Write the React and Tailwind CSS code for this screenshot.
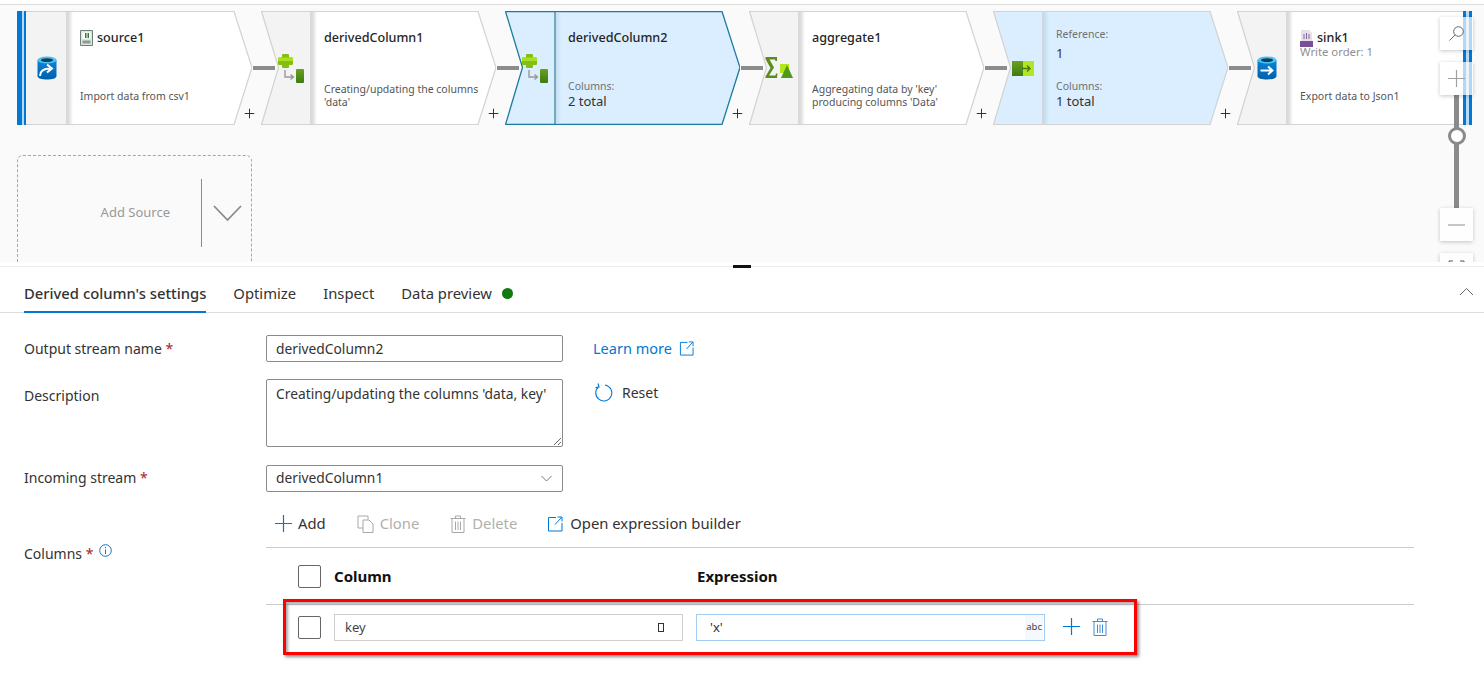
import React from 'react';
import { Plus } from 'lucide-react';

const DbIcon = ({ sink }) => (
    <svg width="20" height="24" viewBox="0 0 20 24">
        <defs>
            <linearGradient id={sink ? 'dbs' : 'dbn'} x1="0" y1="0" x2="0" y2="1">
                <stop offset="0" stopColor="#0a84d8" />
                <stop offset="1" stopColor="#0060ad" />
            </linearGradient>
        </defs>
        <path d="M0.5 4 V20 C0.5 22.5 5 23.5 10 23.5 S19.5 22.5 19.5 20 V4 Z" fill={`url(#${sink ? 'dbs' : 'dbn'})`} />
        <ellipse cx="10" cy="4" rx="9.5" ry="3.6" fill="#4cc3ea" />
        <ellipse cx="10" cy="4.2" rx="6" ry="1.9" fill="#0b3f6d" />
        {sink ? (
            <path d="M3.5 14.5 H15 M11 10.5 L15.5 14.5 L11 18.5" fill="none" stroke="#fff" strokeWidth="2" />
        ) : (
            <path d="M3 20 C3 14.5 7 12.5 13 12.5 M10 8.5 L15 12.5 L10 16.5" fill="none" stroke="#fff" strokeWidth="2" />
        )}
    </svg>
);

const DerivedIcon = () => (
    <svg width="27" height="29" viewBox="0 0 27 29">
        <path d="M5 0 H10 Q11 0 11 1 V3.5 H14 Q15 3.5 15 4.5 V10 Q15 11 14 11 H11 V13 Q11 14 10 14 H5 Q4 14 4 13 V11 H1 Q0 11 0 10 V4.5 Q0 3.5 1 3.5 H4 V1 Q4 0 5 0 Z" fill="#86bd14" />
        <path d="M1 3.5 H14 Q15 3.5 15 4.5 V7 H0 V4.5 Q0 3.5 1 3.5 Z" fill="#a6e01e" />
        <path d="M7 16 V23 H15 M12.5 20.5 L15.5 23 L12.5 25.5" fill="none" stroke="#999" strokeWidth="1.4" />
        <defs>
            <linearGradient id="derg" x1="0" y1="0" x2="0" y2="1">
                <stop offset="0" stopColor="#6aa01e" />
                <stop offset="1" stopColor="#3f7a14" />
            </linearGradient>
        </defs>
        <rect x="18" y="15" width="8" height="14" rx="1" fill="url(#derg)" />
    </svg>
);

const AggregateIcon = () => (
    <svg width="28" height="22" viewBox="0 0 28 22">
        <path d="M0.5 0 H12 V4 H10.5 L10 2.5 H4.5 L9 10.5 L4 18.5 H10.5 L11 16.5 H12.5 L12 21 H0.5 V19.5 L5.5 11 L0.5 2 Z" fill="#5b8c1c" />
        <rect x="15" y="7" width="9" height="9" fill="#b4e61e" />
        <path d="M22 8 L28 21 H16 Z" fill="#4f9a18" />
    </svg>
);

const ReferenceIcon = () => (
    <svg width="22" height="15" viewBox="0 0 22 15">
        <defs>
            <linearGradient id="refg" x1="0" y1="0" x2="0" y2="1">
                <stop offset="0" stopColor="#6aa01e" />
                <stop offset="1" stopColor="#3f7a14" />
            </linearGradient>
        </defs>
        <rect x="0" y="0" width="11" height="15" fill="url(#refg)" />
        <rect x="11" y="0" width="11" height="15" fill="#b4e61e" />
        <path d="M10 7.5 H18 M15 4.5 L18 7.5 L15 10.5" fill="none" stroke="#3f7a14" strokeWidth="1.4" />
    </svg>
);

const CsvIcon = () => (
    <svg width="13" height="16" viewBox="0 0 13 16">
        <path d="M0.5 0.5 H12.5 V15.5 H0.5 Z" fill="#dfe6e2" stroke="#6f7f78" />
        <rect x="2.5" y="2.5" width="8" height="6" fill="#fff" />
        <rect x="5" y="3" width="1.5" height="5" fill="#2f7d32" />
        <rect x="7.5" y="3" width="1.5" height="5" fill="#2f7d32" />
        <rect x="2.5" y="10.5" width="8" height="3" fill="#8b9a93" />
    </svg>
);

const JsonIcon = () => (
    <svg width="13" height="17" viewBox="0 0 13 17">
        <path d="M1 0 H9 L12 3 V17 H1 Z" fill="#e4e2e4" />
        <path d="M4 4 V9 M6.5 3 V9 M9 4 V9" stroke="#8a5fa8" strokeWidth="1" />
        <rect x="0" y="11" width="13" height="6" fill="#7a4f9a" />
    </svg>
);

const LinePlus = ({ color, className }) => (
    <svg className={className} width="17" height="17" viewBox="0 0 17 17" fill="none" stroke={color} strokeWidth="1.2">
        <path d="M0 8.5 H17 M8.5 0 V17" />
    </svg>
);

const nodes = [
    { id: 'source1', shape: 'first', icon: <DbIcon />, fileIcon: <CsvIcon />, title: 'source1', desc: ['Import data from csv1'] },
    { id: 'derivedColumn1', icon: <DerivedIcon />, title: 'derivedColumn1', desc: ["Creating/updating the columns", "'data'"] },
    { id: 'derivedColumn2', selected: true, icon: <DerivedIcon />, title: 'derivedColumn2', columns: '2 total' },
    { id: 'aggregate1', icon: <AggregateIcon />, title: 'aggregate1', desc: ["Aggregating data by 'key'", "producing columns 'Data'"] },
    { id: 'reference', tinted: true, icon: <ReferenceIcon />, reference: '1', columns: '1 total' },
    { id: 'sink1', shape: 'last', icon: <DbIcon sink />, fileIcon: <JsonIcon />, title: 'sink1', order: 'Write order: 1', desc: ['Export data to Json1'] },
];

const nodeOutline = (shape) => {
    const left = shape === 'first' ? 'L0.5 113.5' : 'L0.5 113.5 L17.5 56.5';
    if (shape === 'last') return `M0.5 0.5 H234.5 V113.5 H0.5 L17.5 56.5 Z`;
    return `M0.5 0.5 H217 L235 56.5 L217 113.5 ${left} Z`;
};

const FlowNode = ({ node }) => {
    const blue = node.selected || node.tinted;
    const outline = nodeOutline(node.shape);
    return (
        <div className="relative w-[235px] h-[114px] shrink-0">
            <svg className="absolute inset-0" width="235" height="114" viewBox="0 0 235 114">
                <path d={outline} fill={blue ? '#daeeff' : '#ffffff'} />
                <clipPath id={`clip-${node.id}`}><rect x="0" y="0" width="50" height="114" /></clipPath>
                <path d={outline} fill={blue ? '#daeeff' : '#f3f3f3'} clipPath={`url(#clip-${node.id})`} />
                <path d="M50 0.5 V113.5" stroke={node.selected ? '#4d94ab' : '#cfcfcf'} strokeWidth="1.5" />
                <path d={outline} fill="none" stroke={node.selected ? '#1c7c9e' : '#d2d2d2'} strokeWidth={node.selected ? 1.3 : 1.2} />
            </svg>
            <div className={`absolute left-[51px] top-[1px] bottom-[1px] w-[5px] bg-gradient-to-r ${blue ? 'from-[#c4dcee]' : 'from-[#d8d8d8]'} to-transparent`} />

            <div className="relative flex h-full">
                <div className="w-[50px] shrink-0 pl-[10px] flex items-center justify-center">{node.icon}</div>
                <div className="flex-1 min-w-0 pl-[13px] flex flex-col">
                    {node.title && (
                        <div className="mt-[19px] h-[16px] flex items-center gap-[4px] text-[12.6px] leading-[16px] font-medium text-[#252525]">
                            {node.fileIcon}
                            <span>{node.title}</span>
                        </div>
                    )}
                    {node.order && <div className="text-[11.3px] leading-[11px] text-[#8f8f8f]">{node.order}</div>}
                    {node.reference && (
                        <div className="mt-[16px]">
                            <div className="text-[10.5px] leading-[14px] text-[#707070]">Reference:</div>
                            <div className="mt-[4px] text-[13px] leading-[16px] text-[#333]">{node.reference}</div>
                        </div>
                    )}
                    {node.desc && (
                        <div className="mt-auto mb-[10px] h-[38px] flex flex-col justify-center text-[10.5px] leading-[13px] text-[#555]">
                            {node.desc.map(line => <div key={line}>{line}</div>)}
                        </div>
                    )}
                    {node.columns && (
                        <div className="mt-auto mb-[16px]">
                            <div className="text-[10.5px] leading-[14px] text-[#707070]">Columns:</div>
                            <div className="text-[13px] leading-[16px] text-[#333]">{node.columns}</div>
                        </div>
                    )}
                </div>
            </div>

            {node.shape === 'first' && (
                <div className="absolute left-0 top-0 bottom-0 w-[9px] flex">
                    <div className="w-[5px] bg-[#0078d4]" />
                    <div className="w-[2px] bg-[#b9daf5]" />
                    <div className="w-[2px] bg-[#0078d4]" />
                </div>
            )}
            {node.shape === 'last' && (
                <div className="absolute right-0 top-0 bottom-0 w-[9px] flex">
                    <div className="w-[3px] bg-[#0078d4]" />
                    <div className="w-[3px] bg-[#b9daf5]" />
                    <div className="w-[3px] bg-[#0078d4]" />
                </div>
            )}
            {node.shape !== 'last' && (
                <>
                    <div className="absolute left-[236px] top-[55px] w-[22px] h-[4px] bg-[#8c8c8c]" />
                    <Plus className="absolute left-[225px] top-[95px] text-[#333]" size={15} strokeWidth={1.6} />
                </>
            )}
        </div>
    );
};

const ZoomButton = ({ children, className }) => (
    <div className={`absolute right-[11px] w-[33px] h-[33px] bg-white/70 shadow-[0_1px_4px_rgba(0,0,0,0.22)] flex items-center justify-center ${className}`}>
        {children}
    </div>
);

const Canvas = () => (
    <div className="relative h-[262px] shrink-0 overflow-hidden bg-[#fafafa]">
        <div className="h-[5px] bg-white border-b border-[#dcdcdc]" />
        <div className="flex gap-[9px] pl-[17px] pt-[6px]">
            {nodes.map(node => <FlowNode key={node.id} node={node} />)}
        </div>

        <div className="ml-[17px] mt-[30px] w-[235px] h-[140px] rounded-t-md border border-dashed border-[#a6a6a6] flex items-start">
            <div className="w-[152px] pt-[46px] text-right text-[13px] leading-[20px] text-[#999]">Add Source</div>
            <div className="ml-[31px] mt-[23px] w-[1px] h-[68px] bg-[#8a8a8a]" />
            <svg className="ml-[11px] mt-[49px]" width="29" height="17" viewBox="0 0 29 17">
                <path d="M1 1 L14.5 15 L28 1" fill="none" stroke="#8a8a8a" strokeWidth="1.8" />
            </svg>
        </div>

        <div className="absolute left-[1454px] top-[95px] w-[5px] h-[113px] bg-[#8a8a8a]" />
        <div className="absolute left-[1448px] top-[127px] w-[18px] h-[18px] rounded-full bg-white border-[3px] border-[#8a8a8a]" />
        <ZoomButton className="top-[17px]">
            <svg width="15" height="15" viewBox="0 0 15 15" fill="none" stroke="#666">
                <circle cx="9.5" cy="5.5" r="4.8" />
                <path d="M6 9 L0.5 14.5" />
            </svg>
        </ZoomButton>
        <ZoomButton className="top-[62px]"><LinePlus color="#a0a0a0" /></ZoomButton>
        <ZoomButton className="top-[208px]">
            <svg width="17" height="2" viewBox="0 0 17 2"><path d="M0 1 H17" stroke="#a0a0a0" strokeWidth="1.2" /></svg>
        </ZoomButton>
        <ZoomButton className="top-[253px]">
            <svg className="-mt-[14px]" width="17" height="5" viewBox="0 0 17 5"><path d="M1 5 V1 H5 M12 1 H16 V5" fill="none" stroke="#555" /></svg>
        </ZoomButton>
    </div>
);

const Tabs = () => (
    <div className="relative h-[46px] shrink-0 flex gap-[27px] pl-[24px] border-b border-[#dddddd] text-[14.8px] text-[#333]">
        <div className="h-[46px] pt-[16px] leading-[20px] font-medium border-b-2 border-[#0078d4]">Derived column's settings</div>
        <div className="pt-[16px] leading-[20px]">Optimize</div>
        <div className="pt-[16px] leading-[20px]">Inspect</div>
        <div className="pt-[16px] leading-[20px] flex items-start gap-[10px]">
            Data preview
            <span className="mt-[5px] w-[11px] h-[11px] rounded-full bg-[#107c10]" />
        </div>
        <svg className="absolute left-[1459px] top-[20px]" width="15" height="9" viewBox="0 0 15 9">
            <path d="M1 8 L7.5 1.5 L14 8" fill="none" stroke="#666" />
        </svg>
    </div>
);

const ExternalIcon = ({ className, size = 16 }) => (
    <svg className={className} width={size} height={size} viewBox="0 0 16 16" fill="none" stroke="#0078d4">
        <path d="M9 1.5 H1.5 V15 H15 V7" />
        <path d="M8 8.5 L14.5 1.5 M10.5 1 H15 V5.5" />
    </svg>
);

const TrashIcon = ({ color }) => (
    <svg width="16" height="18" viewBox="0 0 16 18" fill="none" stroke={color}>
        <path d="M0.5 3.5 H15.5 M5.5 3.5 V1 H10.5 V3.5 M2 3.5 V17.5 H14 V3.5 M5.5 6.5 V15 M8 6.5 V15 M10.5 6.5 V15" />
    </svg>
);

const Label = ({ children, required, className, after }) => (
    <div className={`w-[242px] shrink-0 text-[14px] leading-[20px] text-[#333] ${className}`}>
        {children}
        {required && <span className="text-[#a4262c]"> *</span>}
        {after}
    </div>
);

const Checkbox = () => <div className="w-[23px] h-[23px] shrink-0 rounded-[2px] border border-[#666] bg-white" />;

const Form = () => (
    <div className="pl-[24px] pt-[22px] text-[#333]">
        <div className="flex items-center h-[27px]">
            <Label required className="pt-[1px]">Output stream name</Label>
            <input readOnly value="derivedColumn2" className="w-[297px] h-[27px] px-[9px] text-[13.8px] rounded-[2px] border border-[#8a8a8a] text-[#333] outline-none" />
            <a className="ml-[30px] text-[14.5px] text-[#0078d4]">Learn more</a>
            <ExternalIcon className="ml-[7px]" size={15} />
        </div>

        <div className="flex items-start mt-[17px]">
            <Label className="pt-[7px]">Description</Label>
            <textarea readOnly value="Creating/updating the columns 'data, key'" className="block w-[297px] h-[68px] px-[9px] py-[4px] text-[13.8px] leading-[20px] rounded-[2px] border border-[#8a8a8a] text-[#333] outline-none" />
            <svg className="ml-[31px] mt-[4px]" width="19" height="19" viewBox="0 0 19 19" fill="none" stroke="#0078d4" strokeWidth="1.1">
                <path d="M5 3.5 A8 8 0 1 0 11 2 M4 0.5 L5 4 L1.5 4.5" />
            </svg>
            <span className="ml-[9px] mt-[4px] text-[14px] leading-[20px]">Reset</span>
        </div>

        <div className="flex items-center mt-[18px] h-[27px]">
            <Label required className="-mt-[1px]">Incoming stream</Label>
            <div className="w-[297px] h-[27px] pl-[9px] pr-[10px] rounded-[2px] border border-[#8a8a8a] flex items-center justify-between text-[13.8px]">
                derivedColumn1
                <svg width="11" height="7" viewBox="0 0 11 7"><path d="M0.5 1 L5.5 6 L10.5 1" fill="none" stroke="#777" /></svg>
            </div>
        </div>

        <div className="flex items-start mt-[18px]">
            <Label
                required
                className="pt-[34px]"
                after={
                    <svg className="inline-block ml-[6px] -translate-y-[5px]" width="13" height="13" viewBox="0 0 13 13" fill="none" stroke="#0078d4">
                        <circle cx="6.5" cy="6.5" r="5.8" />
                        <path d="M6.5 5.5 V10 M6.5 3 V4.2" />
                    </svg>
                }
            >
                Columns
            </Label>
            <div className="w-[1148px]">
                <div className="h-[38px] pb-[10px] border-b border-[#cccccc] flex items-center text-[14.8px]">
                    <LinePlus className="ml-[9px]" color="#0078d4" />
                    <span className="ml-[6px]">Add</span>
                    <svg className="ml-[31px]" width="18" height="18" viewBox="0 0 18 18" fill="none" stroke="#a8a8a8">
                        <path d="M11 4.5 V1 H1 V13 H6 M6 5 H12 L16 9 V17.5 H6 Z" />
                    </svg>
                    <span className="ml-[5px] text-[#b0b0b0]">Clone</span>
                    <span className="ml-[31px]"><TrashIcon color="#a8a8a8" /></span>
                    <span className="ml-[6px] text-[#b0b0b0]">Delete</span>
                    <ExternalIcon className="ml-[30px]" />
                    <span className="ml-[7px]">Open expression builder</span>
                </div>

                <div className="h-[57px] pl-[32px] border-b border-[#cccccc] flex items-center gap-[13px] text-[15px] font-bold text-[#111]">
                    <Checkbox />
                    <div className="w-[349px]">Column</div>
                    <div className="pl-[1px]">Expression</div>
                </div>

                <div className="relative mt-[9px] h-[27px] pl-[32px] flex items-center gap-[13px]">
                    <Checkbox />
                    <div className="w-[349px] h-[27px] pl-[10px] pr-[18px] pt-[1px] border border-[#cfcfcf] flex items-center justify-between text-[13px] text-[#444]">
                        key
                        <span className="w-[6px] h-[9px] -mt-[2px] border border-[#333]" />
                    </div>
                    <div className="w-[349px] h-[27px] pl-[13px] pr-[1px] border border-[#a3cdf0] flex items-center justify-between text-[13px] text-[#333]">
                        'x'
                        <span className="h-full flex items-center px-[1px] bg-[#f5f9fd] text-[9.5px] text-[#444]">abc</span>
                    </div>
                    <LinePlus className="ml-[5px] -mt-[2px]" color="#0078d4" />
                    <span className="-ml-[1px] -mt-[2px]"><TrashIcon color="#3f8ddb" /></span>
                    <div className="absolute left-[17px] -top-[15px] w-[854px] h-[56px] border-[3px] border-[#ff0000] shadow-[2px_2px_3px_rgba(0,0,0,0.45),inset_2px_2px_3px_rgba(0,0,0,0.35)]" />
                </div>
            </div>
        </div>
    </div>
);

export default function App() {
    return (
        <div className="relative w-[1484px] h-[691px] overflow-hidden bg-white flex flex-col font-['Noto_Sans',sans-serif]">
            <Canvas />
            <div className="relative h-[5px] shrink-0 border-b border-[#ececec]">
                <div className="absolute left-[733px] top-[3px] w-[18px] h-[3px] bg-[#111]" />
            </div>
            <Tabs />
            <Form />
        </div>
    );
}
